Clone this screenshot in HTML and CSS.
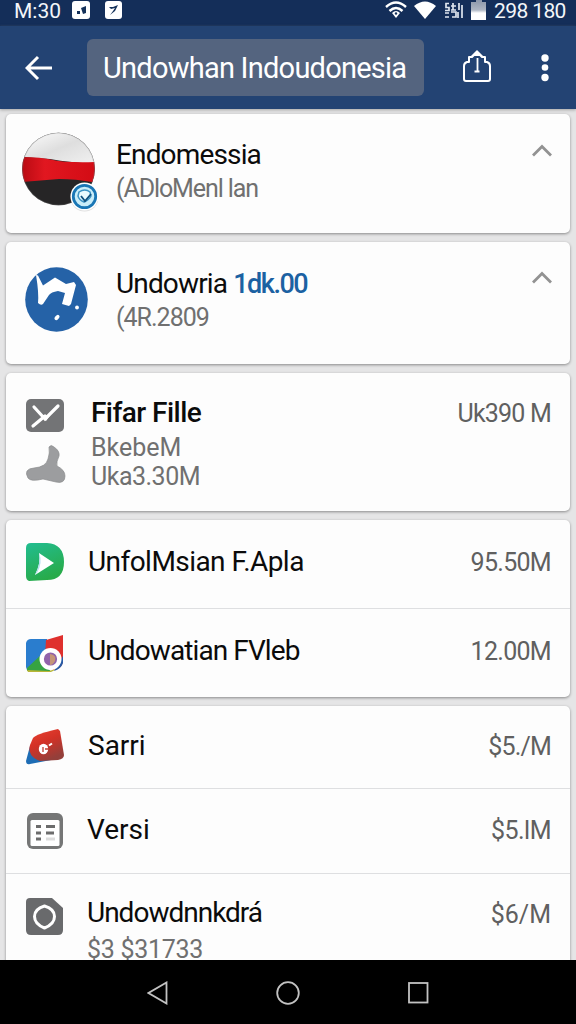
FILE: index.html
```html
<!DOCTYPE html>
<html lang="id">
<head>
<meta charset="utf-8">
<title>Undowhan Indoudonesia</title>
<link rel="stylesheet" href="styles.css">
</head>
<body>
<div class="screen">
  <div class="status">
    <span class="clock">M:30</span>
    <svg class="status-note" width="18" height="18" viewBox="0 0 18 18"><rect width="18" height="18" rx="3" fill="#fff"/><path d="M5 10h3v3H5zM9 7l5-2v7l-3 1-1-3z" fill="#14315a"/></svg>
    <svg class="status-note2" width="17" height="18" viewBox="0 0 17 18"><rect width="17" height="18" rx="3" fill="#fff"/><path d="M4 6h4l5-2-3 6-5 4 3-4 2-3-4 1z" fill="#14315a"/></svg>
    <svg class="wifi" width="22" height="18" viewBox="0 0 22 18"><path d="M1 6Q11-3 21 6M4.500 10Q11 4 17.500 10" fill="none" stroke="#fff" stroke-width="2.400"/><path d="M7 12q4-4 8 0l-4 5z" fill="#fff"/><circle cx="11" cy="12.500" r="1.200" fill="#14315a"/></svg>
    <svg class="signal" width="22" height="18" viewBox="0 0 22 18"><path d="M0 5Q11-4 22 5L11 18z" fill="#fff"/></svg>
    <svg class="net" width="19" height="17" viewBox="0 0 19 17"><path d="M5 1.500H2v4h3v3H1M7 4h5M9 1v7M7 8h5M15 1v7M18 3v13M1 11h4M1 15h4M7 10h5v5H8M14 10v6" fill="none" stroke="#dfe6ef" stroke-width="1.700"/></svg>
    <svg class="battery" width="15" height="20" viewBox="0 0 15 20"><defs><linearGradient id="bat" x2="0" y2="1"><stop stop-color="#8b96a9"/><stop offset=".5" stop-color="#aeb6c3"/><stop offset=".65" stop-color="#fff"/></linearGradient></defs><path d="M5 0h6v2h4v18H0V2h5z" fill="url(#bat)"/></svg>
    <span class="level">298 180</span>
  </div>
  <header class="bar">
    <svg class="back" width="28" height="26" viewBox="0 0 28 26"><path d="M13 2 2 13l11 11M2 13h25" fill="none" stroke="#fff" stroke-width="3"/></svg>
    <div class="search"><span class="query">Undowhan Indoudonesia</span></div>
    <svg class="share" width="28" height="34" viewBox="0 0 28 34"><path d="M6 13V8h3l5-5 5 5h3v5h2q3 1 3 4v13q0 2-2 2H3q-2 0-2-2V17q0-3 3-4z" fill="none" stroke="#fff" stroke-width="2" stroke-linejoin="round"/><path d="M8 7l6-6 6 6z" fill="#fff"/><path d="M14.500 9v14M11.500 22.500h5" fill="none" stroke="#fff" stroke-width="1.800"/></svg>
    <svg class="more" width="8" height="28" viewBox="0 0 8 28"><g fill="#fff"><circle cx="4" cy="4" r="3.700"/><circle cx="4" cy="13.500" r="3.300"/><circle cx="4" cy="23.500" r="3.700"/></g></svg>
  </header>
  <main class="content">
    <section class="card card-a">
      <svg class="flag" width="76" height="80" viewBox="0 0 76 80"><defs><clipPath id="disc"><circle cx="36.500" cy="37" r="36.300"/></clipPath><linearGradient id="silver" x2="1" y2="1"><stop stop-color="#fff"/><stop offset=".5" stop-color="#dedede"/><stop offset="1" stop-color="#f2f2f2"/></linearGradient><linearGradient id="red"><stop stop-color="#b90b13"/><stop offset=".3" stop-color="#e11720"/><stop offset="1" stop-color="#d20b14"/></linearGradient></defs>
        <g clip-path="url(#disc)"><rect width="76" height="80" fill="#262526"/><path d="M0 0h76v32Q50 31 28 27L0 25z" fill="url(#silver)"/><path d="M0 25q19 0 31 3t45 2v21q-22-4-39-4L0 50z" fill="url(#red)"/></g><circle cx="36.500" cy="37" r="36" fill="none" stroke="#777" stroke-opacity=".3"/>
        <circle cx="62.500" cy="65.500" r="14" fill="#aaa" opacity=".35"/><circle cx="62.500" cy="64.500" r="14" fill="#fff"/><circle cx="62.500" cy="64.500" r="11.200" fill="#c9edf9" stroke="#1976b5" stroke-width="2.800"/><path d="M57 60q6-4 11 0l1 4q-2 4-7 6-5-2-6-6z" fill="#eafaff" stroke="#3d93c4" stroke-width="1.500"/><path d="M59 64l4 5 6-7" fill="none" stroke="#10517f" stroke-width="1.800"/></svg>
      <div class="lines"><span class="name n1">Endomessia</span><span class="sub s1">(ADloMenl lan</span></div>
      <svg class="chevron" width="20" height="13" viewBox="0 0 20 13"><path d="M1 11.500 10 2.500l9 9" fill="none" stroke="#929292" stroke-width="2.800"/></svg>
    </section>
    <section class="card card-b">
      <svg class="brand" width="64" height="66" viewBox="0 0 64 66"><ellipse cx="31.500" cy="32.500" rx="31.300" ry="32.300" fill="#2562a7"/><path d="M13 8.500 18 18.500 30 10.500 41 17l4-1 4-1 2 3-5 19-2 2-7-2 3-11-7-2q-7 1-9 4l-6 9q-2 2-5-1 1-10-2-28z" fill="#fff"/><circle cx="52" cy="40.500" r="1.900" fill="#fff"/><ellipse cx="32" cy="50.500" rx="3" ry="1.900" transform="rotate(-50 32 50.500)" fill="#fff"/></svg>
      <div class="lines"><span class="name n2">Undowria <b class="n2b">1dk.00</b></span><span class="sub s2">(4R.2809</span></div>
      <svg class="chevron" width="20" height="13" viewBox="0 0 20 13"><path d="M1 11.500 10 2.500l9 9" fill="none" stroke="#929292" stroke-width="2.800"/></svg>
    </section>
    <section class="card card-c">
      <div class="stack">
        <svg width="38" height="33" viewBox="0 0 38 33"><rect width="38" height="33" rx="5" fill="#737476"/><path d="M8 8l11 12L32 7M7 27l12-10" fill="none" stroke="#fff" stroke-width="3.200" stroke-linecap="round"/><path d="M15 17l5 5 6-8-6 3z" fill="#fff"/></svg>
        <svg width="40" height="39" viewBox="0 0 40 39"><path d="M23 3q2-3 5 0 6 4 5 9-3 6-2 10 8 4 8 10 0 8-9 6L17 35Q5 38 2 34-3 25 8 24q12-1 14-9 2-6 1-12z" fill="#9c9d9f" stroke="#8b8c8e" stroke-width=".7"/></svg>
      </div>
      <div class="lines"><span class="name n3">Fifar Fille</span><span class="sub tight s3">BkebeM</span><span class="sub tight s4">Uka3.30M</span></div>
      <span class="value v1">Uk390 M</span>
    </section>
    <section class="card card-d">
      <div class="row r1">
        <svg class="icon" width="38" height="38" viewBox="0 0 38 38"><defs><linearGradient id="green" x2=".4" y2="1"><stop stop-color="#22bd91"/><stop offset="1" stop-color="#28ab4a"/></linearGradient></defs><path d="M5 0h16q17 1 17 19T21 37L3 38Q0 37 0 33V5q0-5 5-5z" fill="url(#green)"/><path d="M13 10l15 10L9 32q6-12 4-22z" fill="#fff"/><path d="M13 10q4 9-2 20l-2 2q6-12 4-22z" fill="#b5dff0"/></svg>
        <span class="name n4">UnfolMsian F.Apla</span><span class="value v2">95.50M</span>
      </div>
      <div class="row r2">
        <svg class="icon" width="38" height="38" viewBox="0 0 38 38"><path d="M0 9q1-4 5-4h16v16L1 36 0 33z" fill="#2a7dce"/><path d="M20 6 37 1v25q0 9-10 10l-8-14z" fill="#df302d"/><path d="M16 20 1 34v3l24 1-9-14z" fill="#36a342"/><path d="M1 36l22 1 10-3-8 4H2z" fill="#b8b638"/><path d="M37 22v7q-2 6-9 8z" fill="#275ba6"/><circle cx="24.500" cy="25" r="11" fill="#fff"/><circle cx="24.500" cy="25" r="6.600" fill="#9163aa"/><path d="M24 20q7 1 5 7-2 4-5 4z" fill="#c59678"/></svg>
        <span class="name n5">Undowatian FVleb</span><span class="value v3">12.00M</span>
      </div>
    </section>
    <section class="card card-e">
      <div class="row r3">
        <svg class="icon" width="38" height="36" viewBox="0 0 38 36"><defs><linearGradient id="ruby" x2=".5" y2="1"><stop stop-color="#e94332"/><stop offset=".5" stop-color="#d33126"/><stop offset="1" stop-color="#943f3a"/></linearGradient></defs><path d="M4 17 0 32q0 4 4 3l21-4z" fill="#1e6db5"/><path d="M7 9q3-4 25-9l2 2 4 24q0 4-6 5l-18 1Q1 27 4 16z" fill="url(#ruby)"/><ellipse cx="17.500" cy="20" rx="4.700" ry="5.300" fill="#fff"/><path d="M17 18v5M19 20h4" stroke="#c43c30" stroke-width="1.300"/><path d="M23 16.500l3-2" stroke="#fff" stroke-width="2"/></svg>
        <span class="name n6">Sarri</span><span class="value v4">$5./M</span>
      </div>
      <div class="row r4">
        <svg class="icon" width="36" height="36" viewBox="0 0 36 36"><rect width="36" height="36" rx="6" fill="#757676"/><rect x="3.500" y="7" width="29" height="26" rx="1.500" fill="#fff"/><path d="M9 13.500h5M9 20h5M9 26h5M19 13.500h9M19 20h8" stroke="#6c6c6c" stroke-width="3"/><path d="M19 26h9" stroke="#ddd" stroke-width="3"/></svg>
        <span class="name n7">Versi</span><span class="value v5">$5.lM</span>
      </div>
      <div class="row r5">
        <svg class="icon" width="37" height="37" viewBox="0 0 37 37"><path d="M4 0h22l11 10v22q0 5-5 5H5q-5 0-5-5V4q0-4 4-4z" fill="#696a6c"/><path d="M18.500 8q10 3 10 10.500t-10 11.500q-10-4-10-11.500T18.500 8z" fill="none" stroke="#fff" stroke-width="3"/></svg>
        <div class="lines"><span class="name n8">Undowdnnkdrá</span><span class="sub s5">$3 $31733</span></div><span class="value v6">$6/M</span>
      </div>
    </section>
  </main>
  <nav class="nav">
    <svg width="21" height="24" viewBox="0 0 21 24"><path d="M19.500 1.500v21L1.500 12z" fill="none" stroke="#c2c2c2" stroke-width="1.800"/></svg>
    <svg width="24" height="24" viewBox="0 0 24 24"><circle cx="12" cy="12" r="10.800" fill="none" stroke="#c2c2c2" stroke-width="1.800"/></svg>
    <svg width="21" height="22" viewBox="0 0 21 22"><rect x="1" y="1" width="18.500" height="19.500" fill="none" stroke="#c2c2c2" stroke-width="1.800"/></svg>
  </nav>
</div>
</body>
</html>
```
FILE: styles.css
```css
* { box-sizing: border-box; }
body { margin: 0; font-family: Roboto, "Liberation Sans", sans-serif; }
svg { display: block; flex: none; }
.screen { width: 576px; height: 1024px; overflow: hidden; display: flex; flex-direction: column; background: #e5e5e6; }
.status { height: 26px; flex: none; background: #142e59; display: flex; align-items: flex-start; color: #f3f6fa; font-size: 21px; line-height: 22px; white-space: nowrap; }
.clock { width: 58px; margin-left: 14px; }
.status-note { margin-top: 1px; }
.status-note2 { margin: 1px 0 0 15px; }
.wifi { margin: 1px 0 0 263px; }
.signal { margin: 1px 0 0 7px; }
.net { margin: 2px 0 0 8px; }
.battery { margin-left: 8px; }
.level { margin-left: 8px; letter-spacing: -0.6px; }
.bar { height: 83px; flex: none; display: flex; align-items: center; background: #234373; padding-left: 25px; box-shadow: 0 1px 3px #7779; z-index: 1; }
.search { width: 337px; height: 57px; margin-left: 34px; padding-left: 16px; border-radius: 6px; background: #54647f; display: flex; align-items: center; color: #fff; }
.query { font-size: 29px; line-height: 36px; white-space: nowrap; letter-spacing: -0.76px; }
.share { margin-left: 39px; margin-bottom: 3px; }
.more { margin-left: 50px; }
.content { flex: 1; min-height: 0; overflow: hidden; padding: 5px 6px 0; display: flex; flex-direction: column; gap: 9px; }
.card { flex: none; background: #fdfdfd; border-radius: 5px; box-shadow: 0 1px 3px #0006; display: flex; align-items: flex-start; }
.card-a { height: 119px; }
.card-b { height: 122px; }
.card-c { height: 138px; }
.card-d, .card-e { flex-direction: column; }
.card-d { height: 177px; }
.card-e { height: 270px; }
.card-a .lines { margin-top: 24px; }
.card-b .lines { margin-top: 25px; }
.flag { margin: 18px 18px 0 16px; }
.brand { margin: 25px 27px 0 19px; }
.chevron { margin: 30px 18px 0 auto; }
.card-b .chevron { margin-top: 29px; }
.lines { display: flex; flex-direction: column; align-items: flex-start; }
.name { font-size: 28px; line-height: 34px; color: #0b0b0b; white-space: nowrap; }
.sub { font-size: 25px; line-height: 34px; color: #707070; white-space: nowrap; }
.tight { line-height: 29px; }
.value { font-size: 25px; line-height: 34px; color: #606060; margin-left: auto; margin-right: 19px; white-space: nowrap; }
.stack { width: 40px; margin: 26px 25px 0 20px; display: flex; flex-direction: column; gap: 12px; }
.card-c .lines { margin-top: 23px; }
.n3 { font-weight: 500; margin-bottom: 3px; letter-spacing: -0.55px; }
.card-c .value { margin-top: 24px; }
.row { width: 100%; display: flex; align-items: center; padding-left: 20px; }
.row .icon { margin-right: 24px; }
.row > .name { margin-bottom: 4px; }
.row > .value { margin-bottom: 2px; }
.r1 { height: 89px; border-bottom: 1px solid #dedfe1; }
.r1 .icon { margin-bottom: 4px; }
.r2 { height: 88px; }
.r3 { height: 83px; border-bottom: 1px solid #dedfe1; }
.r3 > .name, .r4 > .name { margin-bottom: 2px; }
.r3 > .value, .r4 > .value { margin-bottom: 0; }
.r4 { height: 85px; border-bottom: 1px solid #dedfe1; }
.r4 .icon { margin: 0 24px 0 1px; }
.r5 { height: 102px; align-items: flex-start; }
.r5 .icon { margin: 24px 24px 0 0; }
.r5 .lines { margin-top: 22px; }
.r5 .sub { line-height: 40px; }
.r5 > .value { margin-top: 24px; }
.n1, .n2 { letter-spacing: -0.85px; }
.n2b { font-size: 27px; color: #1b61a2; font-weight: 500; letter-spacing: -1.5px; }
.n4 { letter-spacing: -0.55px; }
.n5 { letter-spacing: -0.9px; }
.n8 { letter-spacing: -1px; }
.s1 { letter-spacing: -1.1px; }
.s2 { letter-spacing: -1px; }
.s4 { letter-spacing: -0.5px; }
.s5 { letter-spacing: -0.3px; }
.v1, .v4 { letter-spacing: -0.8px; }
.v2, .v3 { letter-spacing: -0.7px; }
.v5 { letter-spacing: -0.5px; }
.nav { height: 64px; flex: none; background: #000; display: flex; align-items: center; padding: 2px 0 0 147px; gap: 108px; }
```
